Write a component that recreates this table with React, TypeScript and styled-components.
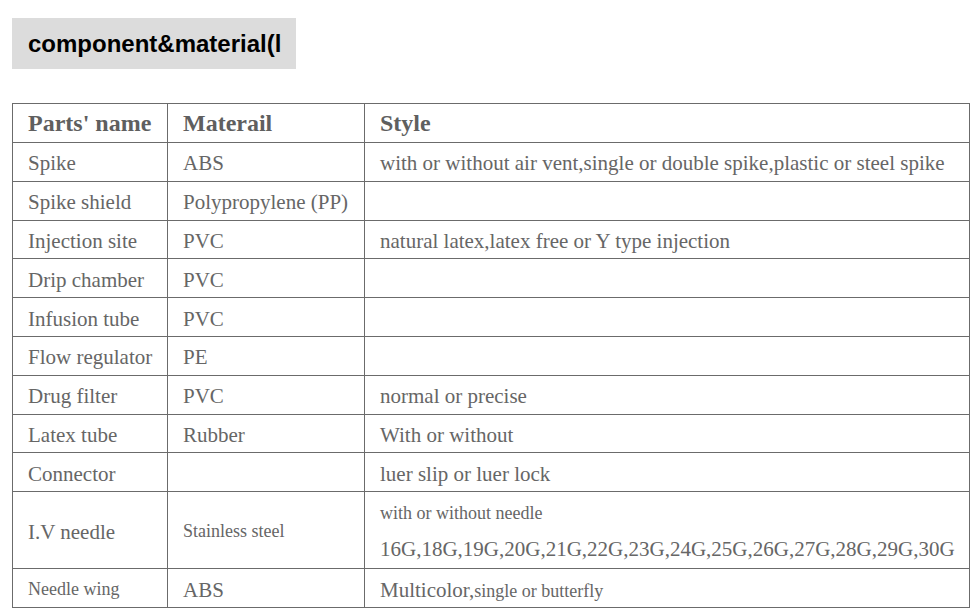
import React from 'react';
import styled, {createGlobalStyle} from "styled-components";

type RowType = {
    name: string
    material: string
    style?: React.ReactNode
    small?: boolean
    smallMaterial?: boolean
    tall?: boolean
}

const GlobalStyle = createGlobalStyle`
    html, body {
        margin: 0;
        padding: 0;
        background: #ffffff;
    }
`;

const Page = styled.div`
    padding: 18px 9px 0 12px;
    display: flex;
    flex-direction: column;
    align-items: flex-start;
    gap: 34px;
`;

const Heading = styled.h2`
    margin: 0;
    height: 51px;
    width: 284px;
    box-sizing: border-box;
    padding: 0 16px;
    display: flex;
    align-items: center;
    background: #dcdcdc;
    color: #000;
    font-family: "Liberation Sans", Arial, sans-serif;
    font-weight: 700;
    font-size: 24px;
    white-space: nowrap;
    overflow: hidden;
`;

const Table = styled.table`
    width: 958px;
    border-collapse: collapse;
    table-layout: fixed;
    font-family: "Liberation Serif", "Times New Roman", serif;
    color: #666666;
`;

const Th = styled.th`
    border: 1px solid #6b6b6b;
    height: 38px;
    padding: 0 15px;
    text-align: left;
    font-size: 24px;
    font-weight: 700;
    color: #5f5f5f;
`;

const Row = styled.tr<{ $tall?: boolean }>`
    height: ${(p) => (p.$tall ? "77px" : "38.8px")};
`;

const Td = styled.td<{ $small?: boolean }>`
    border: 1px solid #6b6b6b;
    padding: 4px 15px 0;
    font-size: ${(p) => (p.$small ? "18px" : "21px")};
    line-height: 1.1;
    white-space: nowrap;
    vertical-align: middle;
`;

const SmallLine = styled.div`
    font-size: 18px;
    line-height: 20px;
    margin-bottom: 14px;
`;

const BigLine = styled.div`
    font-size: 21px;
    line-height: 24px;
`;

const Small = styled.span`
    font-size: 18px;
`;

const rows: RowType[] = [
    {name: "Spike", material: "ABS", style: "with or without air vent,single or double spike,plastic or steel spike"},
    {name: "Spike shield", material: "Polypropylene (PP)"},
    {name: "Injection site", material: "PVC", style: "natural latex,latex free or Y type injection"},
    {name: "Drip chamber", material: "PVC"},
    {name: "Infusion tube", material: "PVC"},
    {name: "Flow regulator", material: "PE"},
    {name: "Drug filter", material: "PVC", style: "normal or precise"},
    {name: "Latex tube", material: "Rubber", style: "With or without"},
    {name: "Connector", material: "", style: "luer slip or luer lock"},
    {
        name: "I.V needle",
        material: "Stainless steel",
        smallMaterial: true,
        tall: true,
        style: (
            <>
                <SmallLine>with or without needle</SmallLine>
                <BigLine>16G,18G,19G,20G,21G,22G,23G,24G,25G,26G,27G,28G,29G,30G</BigLine>
            </>
        ),
    },
    {
        name: "Needle wing",
        material: "ABS",
        small: true,
        style: <>Multicolor,<Small>single or butterfly</Small></>,
    },
];

const App = () => {
    return (
        <>
            <GlobalStyle/>
            <Page>
                <Heading>component&amp;material(l</Heading>
                <Table>
                    <colgroup>
                        <col style={{width: 155}}/>
                        <col style={{width: 197}}/>
                        <col/>
                    </colgroup>
                    <thead>
                    <tr>
                        <Th>Parts' name</Th>
                        <Th>Materail</Th>
                        <Th>Style</Th>
                    </tr>
                    </thead>
                    <tbody>
                    {rows.map((r) => (
                        <Row key={r.name} $tall={r.tall}>
                            <Td $small={r.small}>{r.name}</Td>
                            <Td $small={r.smallMaterial}>{r.material}</Td>
                            <Td>{r.style}</Td>
                        </Row>
                    ))}
                    </tbody>
                </Table>
            </Page>
        </>
    );
};

export default App;
